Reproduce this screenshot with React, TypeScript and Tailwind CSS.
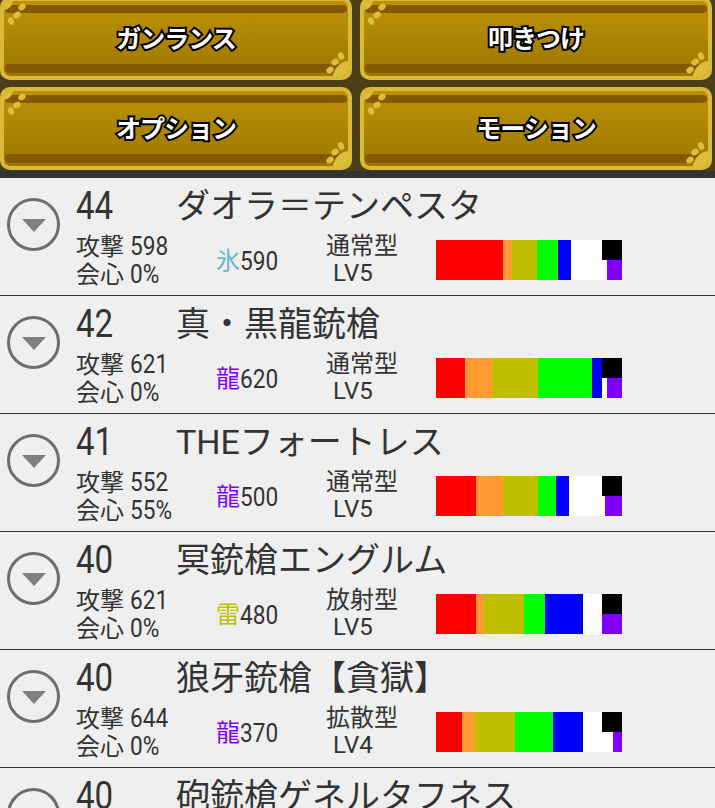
const sans = "font-['Roboto','Noto_Sans_CJK_JP',sans-serif]";
// the digits in the shot are taller and narrower than Roboto
const digits = 'inline-block origin-left scale-x-[0.87]';

const COLORS = ['bg-[#ff0000]', 'bg-[#ff9933]', 'bg-[#bfbf00]', 'bg-[#00ff00]', 'bg-[#0000ff]'];

type Weapon = {
  rarity: number;
  name: string;
  attack: number;
  crit: number;
  element: string;
  elementColor: string;
  elementValue: number;
  shell: string;
  level: number;
  sharpness: number[];
  purple: number;
};

const weapons: Weapon[] = [
  { rarity: 44, name: 'ダオラ＝テンペスタ', attack: 598, crit: 0, element: '氷', elementColor: 'text-[#6db5c9]', elementValue: 590, shell: '通常型', level: 5, sharpness: [67, 9, 25, 21, 13], purple: 15 },
  { rarity: 42, name: '真・黒龍銃槍', attack: 621, crit: 0, element: '龍', elementColor: 'text-[#8000ff]', elementValue: 620, shell: '通常型', level: 5, sharpness: [29, 27, 46, 54, 10], purple: 15 },
  { rarity: 41, name: 'THEフォートレス', attack: 552, crit: 55, element: '龍', elementColor: 'text-[#8000ff]', elementValue: 500, shell: '通常型', level: 5, sharpness: [40, 27, 35, 18, 13], purple: 17 },
  { rarity: 40, name: '冥銃槍エングルム', attack: 621, crit: 0, element: '雷', elementColor: 'text-[#bfbf00]', elementValue: 480, shell: '放射型', level: 5, sharpness: [40, 8, 40, 21, 38], purple: 20 },
  { rarity: 40, name: '狼牙銃槍【貪獄】', attack: 644, crit: 0, element: '龍', elementColor: 'text-[#8000ff]', elementValue: 370, shell: '拡散型', level: 4, sharpness: [26, 13, 40, 38, 30], purple: 9 },
  { rarity: 40, name: '砲銃槍ゲネルタフネス', attack: 0, crit: 0, element: '', elementColor: '', elementValue: 0, shell: '', level: 0, sharpness: [], purple: 0 },
];

const Ornament = ({ flip }: { flip?: boolean }) => (
  <svg width="30" height="30" viewBox="0 0 30 30" className={`absolute ${flip ? 'bottom-0 right-0 rotate-180' : 'left-0 top-0'}`}>
    <path d={flip ? 'M0 0 H15 C14 8 8 14 0 15 Z' : 'M0 0 H9 C8 5 5 8 0 9 Z'} fill="#dcbd3c" />
    <ellipse cx="18" cy="6" rx="4" ry="3" transform="rotate(-35 18 6)" fill="#dcbd3c" />
    <ellipse cx="13" cy="14" rx="4" ry="3" transform="rotate(-35 13 14)" fill="#dcbd3c" />
    <ellipse cx="7" cy="20" rx="3" ry="4" transform="rotate(-20 7 20)" fill="#dcbd3c" />
  </svg>
);

const GoldButton = ({ label }: { label: string }) => (
  <div className="relative flex h-[83px] items-center justify-center overflow-hidden rounded-[10px] border-[4px] border-[#d9b936] bg-gradient-to-b from-[#bd9208] to-[#9c7800]">
    <div className="absolute inset-x-[1px] top-[4px] h-[8px] rounded-sm bg-[#835a00]" />
    <div className="absolute inset-x-[1px] bottom-[3px] h-[9px] rounded-sm bg-[#835a00]" />
    <Ornament />
    <Ornament flip />
    <span className={`relative top-[1px] ${sans} text-[25px] font-bold tracking-[-1px] text-white [-webkit-text-stroke:4px_#000] [paint-order:stroke_fill]`}>{label}</span>
  </div>
);

const Sharpness = ({ sharpness, purple }: { sharpness: number[]; purple: number }) => (
  <div className="relative flex h-10 w-[186px] bg-white">
    {sharpness.map((w, i) => (
      <div key={i} className={`h-full ${COLORS[i]}`} style={{ width: w }} />
    ))}
    <div className="absolute right-0 top-0 h-5 w-5 bg-black" />
    <div className="absolute bottom-0 right-0 h-5 bg-[#8000ff]" style={{ width: purple }} />
  </div>
);

const Row = ({ w }: { w: Weapon }) => (
  <div className="flex h-[118px] shrink-0 border-b border-[#333] pl-[7px]">
    <div className="mt-[20px] flex h-[53px] w-[53px] shrink-0 items-center justify-center rounded-full border-[3px] border-[#6e6e6e]">
      <div className="mt-[2px] h-0 w-0 border-x-[12px] border-t-[13px] border-x-transparent border-t-[#808080]" />
    </div>
    <div className="ml-[16px] flex-1">
      <div className="flex h-[55px] items-center text-[34px] leading-none text-[#333]">
        <span className="w-[100px]">
          <span className={`${digits} text-[38px]`}>{w.rarity}</span>
        </span>
        <span className="whitespace-nowrap">{w.name}</span>
      </div>
      {w.sharpness.length > 0 && (
        <div className="flex text-[24px] leading-[27px] text-[#333]">
          <div className="w-[140px] whitespace-nowrap">
            <div>攻撃 <span className={`${digits} text-[26px]`}>{w.attack}</span></div>
            <div>会心 <span className={`${digits} text-[26px]`}>{w.crit}%</span></div>
          </div>
          <div className="flex w-[110px] items-center whitespace-nowrap">
            <span className={w.elementColor}>{w.element}</span>
            <span className={`${digits} text-[26px]`}>{w.elementValue}</span>
          </div>
          <div className="w-[110px] whitespace-nowrap">
            <div>{w.shell}</div>
            <div className="pl-[7px]">LV{w.level}</div>
          </div>
          <div className="pt-[7px]">
            <Sharpness sharpness={w.sharpness} purple={w.purple} />
          </div>
        </div>
      )}
    </div>
  </div>
);

export default function App() {
  return (
    <div className={`flex h-[808px] w-[715px] flex-col overflow-hidden bg-[#efefef] ${sans}`}>
      <div className="h-[178px] shrink-0 bg-[linear-gradient(to_bottom,#4a3f16_96%,#333_96%)]">
        <div className="-mt-[3px] grid grid-cols-[352px_352px] gap-x-[8px] gap-y-[7px]">
          <GoldButton label="ガンランス" />
          <GoldButton label="叩きつけ" />
          <GoldButton label="オプション" />
          <GoldButton label="モーション" />
        </div>
      </div>
      {weapons.map((w, i) => (
        <Row key={i} w={w} />
      ))}
    </div>
  );
}
